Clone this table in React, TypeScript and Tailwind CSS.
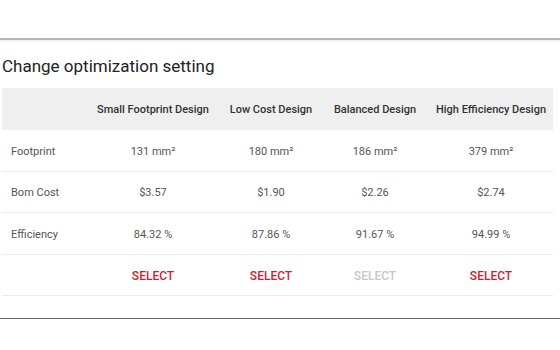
import React from "react";

const cols = [
  { name: "Small Footprint Design", fp: "131 mm²", cost: "$3.57", eff: "84.32 %", active: true },
  { name: "Low Cost Design", fp: "180 mm²", cost: "$1.90", eff: "87.86 %", active: true },
  { name: "Balanced Design", fp: "186 mm²", cost: "$2.26", eff: "91.67 %", active: false },
  { name: "High Efficiency Design", fp: "379 mm²", cost: "$2.74", eff: "94.99 %", active: true },
];

const grid = "grid grid-cols-[86px_130px_106px_102px_127px]";
const cellPad = ["", "", "", "", "pl-[3px]"];

export default function App() {
  return (
    <div className="w-[560px] h-[350px] bg-white overflow-hidden" style={{ fontFamily: "Roboto, 'Liberation Sans', sans-serif" }}>
      <div className="h-[38px]" />
      <div className="h-[2px] bg-[#b4b4b4]" />
      <div className="h-[2px] bg-[#f2f2f2]" />
      <div className="pl-[2px] pr-[7px]">
        <div className="h-[46px] flex items-center text-[17px] text-[#222] leading-none pt-[3px]">Change optimization setting</div>
        <div className={`${grid} h-[42px] items-center pt-[2px] bg-[#efefef] text-[11px] font-medium text-[#333]`}>
          <div />
          {cols.map((c, i) => (
            <div key={c.name} className={`text-center whitespace-nowrap ${cellPad[i + 1]}`}>{c.name}</div>
          ))}
        </div>
        {[
          ["Footprint", "fp", "h-[42px]"],
          ["Bom Cost", "cost", "h-[41px]"],
          ["Efficiency", "eff", "h-[42px]"],
        ].map(([label, key, h]) => (
          <div key={label} className={`${grid} ${h} items-center pt-[3px] border-b border-[#ebebeb] text-[11px] text-[#555]`}>
            <div className="pl-[9px]">{label}</div>
            {cols.map((c, i) => (
              <div key={c.name} className={`text-center ${cellPad[i + 1]}`}>{(c as any)[key]}</div>
            ))}
          </div>
        ))}
        <div className={`${grid} h-[41px] items-center pt-[2px] border-b border-[#ebebeb] text-[12px] font-medium`}>
          <div />
          {cols.map((c, i) => (
            <div key={c.name} className={`text-center ${cellPad[i + 1]} ${c.active ? "text-[#cc1f2f]" : "text-[#c8c8c8]"}`}>SELECT</div>
          ))}
        </div>
      </div>
      <div className="h-[22px]" />
      <div className="h-[1px] bg-[#666]" />
    </div>
  );
}
